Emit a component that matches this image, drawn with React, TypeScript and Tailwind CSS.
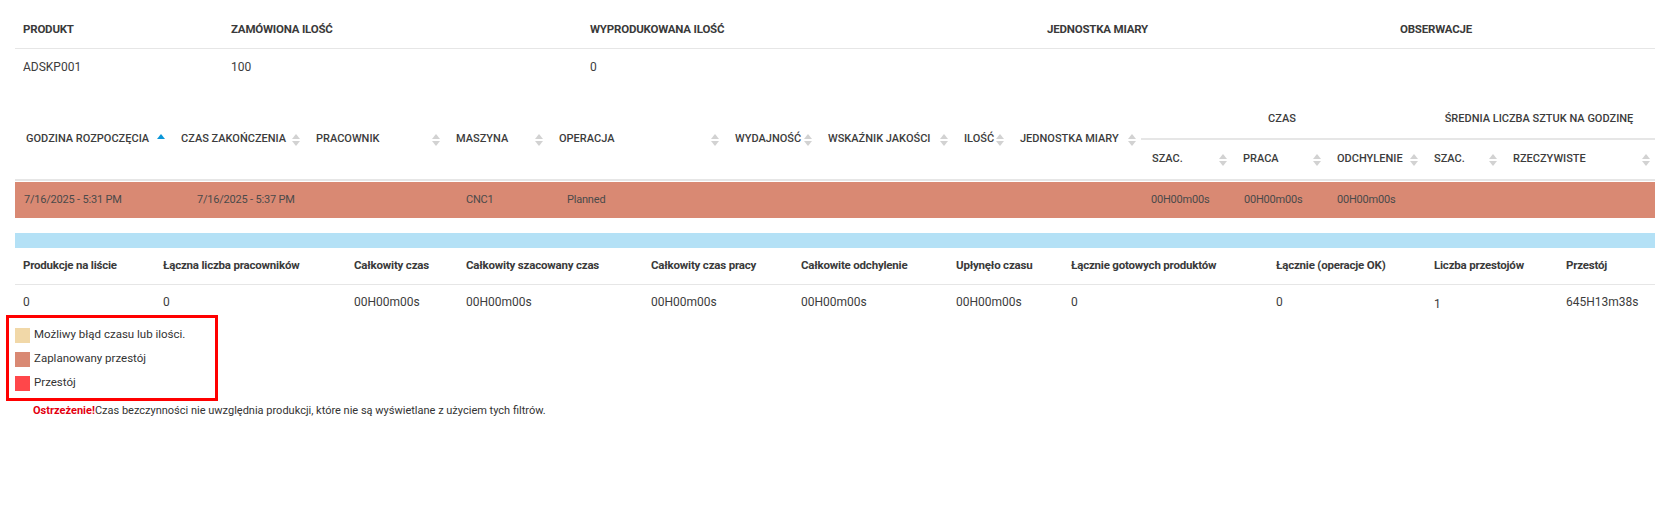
import React from "react";

type SortState = "none" | "asc";

function SortIcon({ state = "none" }: { state?: SortState }) {
  // dwa trójkąty; aktywne sortowanie pokazuje tylko niebieski w górę
  if (state === "asc") {
    return (
      <svg width="8" height="12" viewBox="0 0 8 12" className="shrink-0">
        <polygon points="0,5 4,0 8,5" fill="#0a96d8" />
      </svg>
    );
  }
  return (
    <svg width="8" height="12" viewBox="0 0 8 12" className="shrink-0">
      <polygon points="0,5 4,0 8,5" fill="#d2d2d2" />
      <polygon points="0,7 4,12 8,7" fill="#d2d2d2" />
    </svg>
  );
}

const topCols = ["PRODUKT", "ZAMÓWIONA ILOŚĆ", "WYPRODUKOWANA ILOŚĆ", "JEDNOSTKA MIARY", "OBSERWACJE"];
const topVals = ["ADSKP001", "100", "0", "", ""];

const summaryCols = [
  "Produkcje na liście",
  "Łączna liczba pracowników",
  "Całkowity czas",
  "Całkowity szacowany czas",
  "Całkowity czas pracy",
  "Całkowite odchylenie",
  "Upłynęło czasu",
  "Łącznie gotowych produktów",
  "Łącznie (operacje OK)",
  "Liczba przestojów",
  "Przestój",
];
const summaryVals = ["0", "0", "00H00m00s", "00H00m00s", "00H00m00s", "00H00m00s", "00H00m00s", "0", "0", "1", "645H13m38s"];

function HeadCell({ label, sort = "none", className = "" }: { label: string; sort?: SortState; className?: string }) {
  return (
    <div className={`flex items-center justify-between pl-[11px] pr-[5px] text-[11px] font-medium text-[#3c3c3c] whitespace-nowrap ${className}`}>
      <span>{label}</span>
      <SortIcon state={sort} />
    </div>
  );
}

export default function App() {
  return (
    <div className="w-[1676px] h-[513px] overflow-hidden bg-white px-[6px] pt-[12px] font-['Roboto',sans-serif] text-[#3c3c3c]">
      <div className="ml-[9px] w-[1640px]">
        {/* informacje o produkcie */}
        <div className="grid grid-cols-[208px_359px_457px_353px_263px]">
          {topCols.map((c) => (
            <div key={c} className="flex h-[37px] items-center border-b border-[#e6e6e6] pl-2 text-[11.5px] font-bold tracking-[-0.2px] text-[#3a3a3a]">
              {c}
            </div>
          ))}
          {topVals.map((v, i) => (
            <div key={i} className="flex h-[36px] items-center pl-2 text-[12px]">
              {v}
            </div>
          ))}
        </div>

        {/* tabela operacji */}
        <div className="mt-[15px] grid grid-cols-[155px_135px_140px_103px_176px_93px_136px_56px_132px_91px_94px_97px_79px_153px] grid-rows-[40px_39px] border-b-2 border-[#e6e6e6]">
          <HeadCell label="GODZINA ROZPOCZĘCIA" sort="asc" className="row-span-2 pr-[3px]" />
          <HeadCell label="CZAS ZAKOŃCZENIA" className="row-span-2" />
          <HeadCell label="PRACOWNIK" className="row-span-2" />
          <HeadCell label="MASZYNA" className="row-span-2" />
          <HeadCell label="OPERACJA" className="row-span-2" />
          <HeadCell label="WYDAJNOŚĆ" className="row-span-2" />
          <HeadCell label="WSKAŹNIK JAKOŚCI" className="row-span-2" />
          <HeadCell label="ILOŚĆ" className="row-span-2" />
          <HeadCell label="JEDNOSTKA MIARY" className="row-span-2" />
          <div className="col-span-3 flex items-center justify-center border-b-2 border-[#e6e6e6] text-[11px] font-medium">CZAS</div>
          <div className="col-span-2 flex items-center justify-center border-b-2 border-[#e6e6e6] text-[11px] font-medium">ŚREDNIA LICZBA SZTUK NA GODZINĘ</div>
          <HeadCell label="SZAC." />
          <HeadCell label="PRACA" />
          <HeadCell label="ODCHYLENIE" />
          <HeadCell label="SZAC." />
          <HeadCell label="RZECZYWISTE" />
        </div>
        <div className="mt-px grid h-[36px] grid-cols-[155px_135px_140px_103px_176px_93px_136px_56px_132px_91px_94px_97px_79px_153px] items-center bg-[#d98973] text-[11px] text-[#4a4a4a] tracking-[-0.2px]">
          <div className="pl-[9px]">7/16/2025 - 5:31 PM</div>
          <div className="pl-[27px]">7/16/2025 - 5:37 PM</div>
          <div />
          <div className="pl-[21px]">CNC1</div>
          <div className="pl-[19px]">Planned</div>
          <div />
          <div />
          <div />
          <div />
          <div className="pl-[10px]">00H00m00s</div>
          <div className="pl-[12px]">00H00m00s</div>
          <div className="pl-[11px]">00H00m00s</div>
          <div />
          <div />
        </div>

        <div className="mt-[15px] h-[15px] bg-[#b4e1f6]" />

        {/* podsumowanie */}
        <div className="grid grid-cols-[140px_191px_112px_185px_150px_155px_115px_205px_158px_132px_97px]">
          {summaryCols.map((c) => (
            <div key={c} className="flex h-[37px] items-center border-b border-[#e6e6e6] pl-2 text-[11.5px] font-bold tracking-[-0.2px] whitespace-nowrap text-[#3a3a3a]">
              {c}
            </div>
          ))}
          {summaryVals.map((v, i) => (
            <div key={i} className={`h-[30px] pl-2 text-[12px] leading-4 ${i === 9 ? "pt-[11px]" : "pt-[9px]"}`}>
              {v}
            </div>
          ))}
        </div>
      </div>

      {/* legenda */}
      <div className="flex w-[212px] flex-col border-[3px] border-[#ff0000] pb-[3px] pl-[6px] pt-[5px] text-[11.5px] text-[#333]">
        {[
          ["bg-[#f1d8a8]", "Możliwy błąd czasu lub ilości."],
          ["bg-[#d98973]", "Zaplanowany przestój"],
          ["bg-[#ff474a]", "Przestój"],
        ].map(([color, label]) => (
          <div key={label} className="flex h-[24px] items-center gap-1">
            <span className={`h-[15px] w-[15px] ${color}`} />
            <span>{label}</span>
          </div>
        ))}
      </div>
      <div className="ml-[27px] mt-[2px] h-[16px] text-[11px] leading-4 text-[#333]">
        <span className="font-bold text-[#e3000f]">Ostrzeżenie!</span>
        Czas bezczynności nie uwzględnia produkcji, które nie są wyświetlane z użyciem tych filtrów.
      </div>
    </div>
  );
}
